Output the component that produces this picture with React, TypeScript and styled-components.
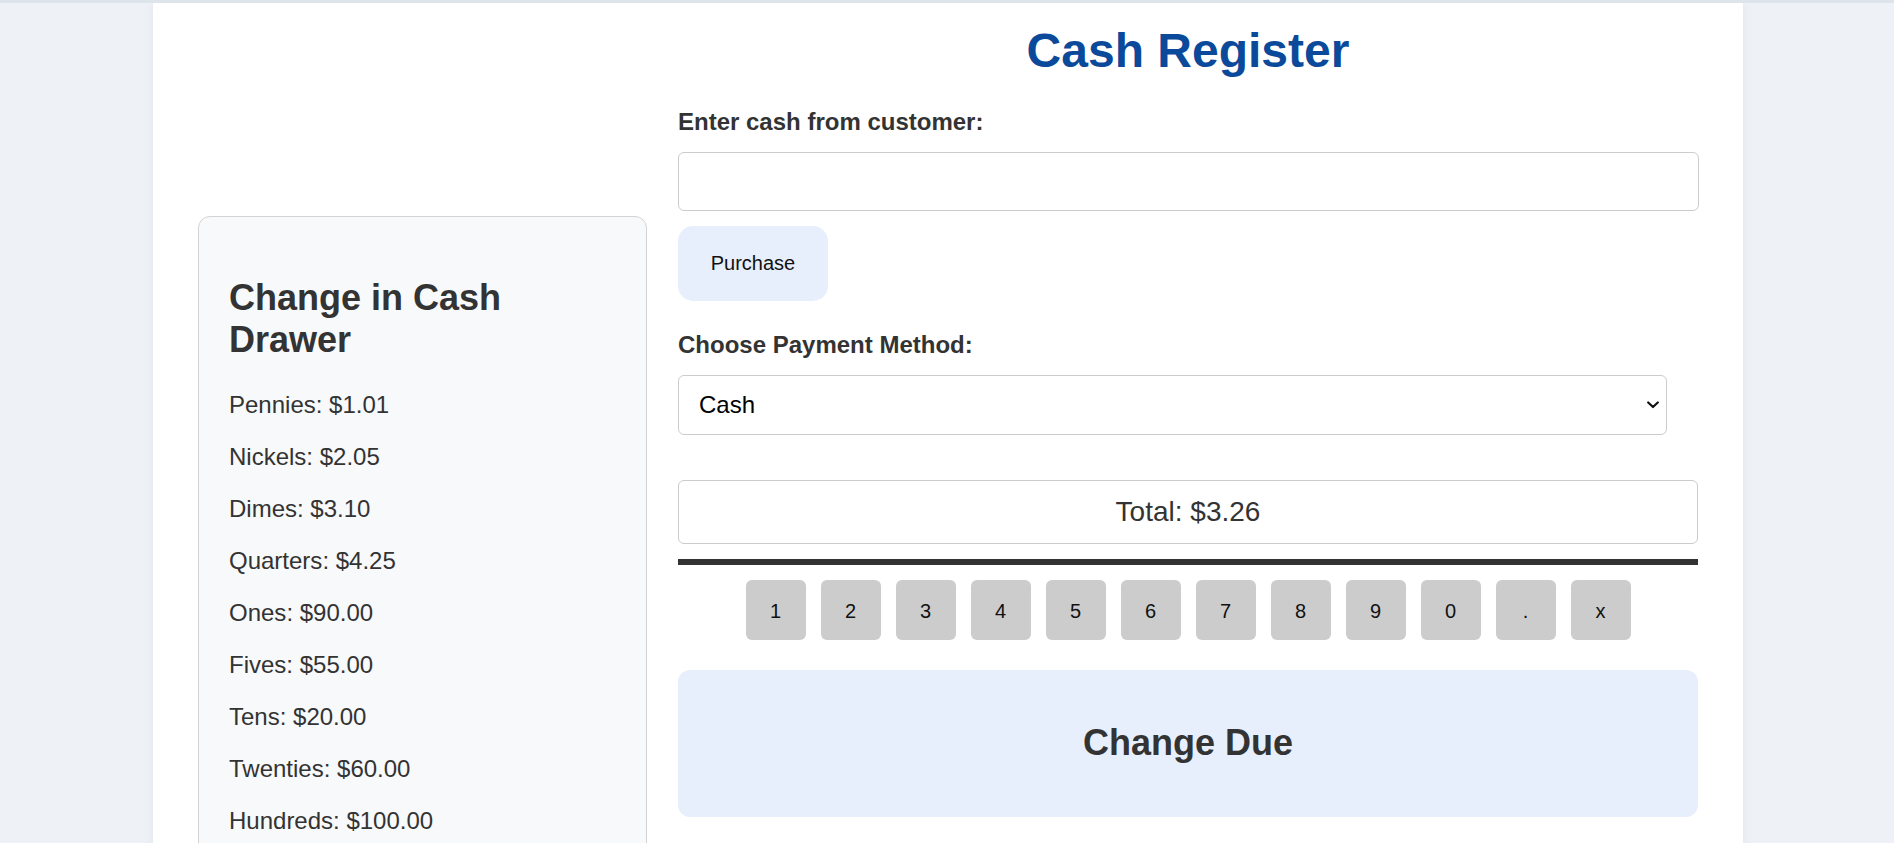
import React from "react";
import styled, { createGlobalStyle } from "styled-components";

const GlobalStyle = createGlobalStyle`
  html { scrollbar-width: none; }
  html::-webkit-scrollbar { display: none; }
  body {
    margin: 0;
    background: #eef2f7;
    border-top: 3px solid #dde4ea;
    font-family: "Liberation Sans", Arial, sans-serif;
    color: #333;
  }
  * { box-sizing: border-box; }
`;

const Page = styled.div`
  width: 1590px;
  margin: 0 0 0 calc(50% - 794px);
  background: #ffffff;
  box-shadow: 0 0 10px rgba(0, 0, 0, 0.06);
  padding: 19.5px 45px 45px;
  display: flex;
  align-items: flex-start;
  gap: 31px;
`;

const DrawerCard = styled.aside`
  flex: 0 0 449px;
  margin-top: 193.5px;
  background: #f8f9fa;
  border: 1px solid #d3d3d3;
  border-radius: 12px;
  padding: 30px;
`;

const DrawerTitle = styled.h2`
  margin: 30px 0;
  font-size: 36px;
  font-weight: 700;
  color: #333;
  line-height: normal;
`;

const DrawerItem = styled.p`
  margin: 24px 0;
  font-size: 24px;
  color: #333;
  line-height: normal;
`;

const Main = styled.main`
  flex: 1 1 auto;
  min-width: 0;
  display: flex;
  flex-direction: column;
  align-items: flex-start;
`;

const Title = styled.h1`
  align-self: stretch;
  margin: 0 0 30px;
  text-align: center;
  font-size: 48px;
  font-weight: 700;
  color: #0b4a9b;
  line-height: normal;
`;

const Label = styled.label`
  display: block;
  font-size: 24px;
  font-weight: 700;
  color: #333;
  margin-bottom: 16px;
  line-height: normal;
`;

const CashInput = styled.input`
  width: calc(100% + 1px);
  height: 59px;
  border: 1px solid #cccccc;
  border-radius: 6px;
  padding: 0 15px;
  font-size: 24px;
  font-family: inherit;
  margin: 0 0 15px;
  outline: none;
`;

const PurchaseButton = styled.button`
  width: 150px;
  height: 75px;
  border: none;
  border-radius: 15px;
  background: #e8effc;
  color: #111;
  font-family: "Liberation Sans", Arial, sans-serif;
  font-size: 20px;
  margin-bottom: 30px;
  cursor: pointer;
`;

const SelectWrap = styled.div`
  position: relative;
  width: 97%;
  margin-bottom: 45px;
`;

const MethodSelect = styled.select`
  appearance: none;
  -webkit-appearance: none;
  width: 100%;
  height: 60px;
  border: 1px solid #cccccc;
  border-radius: 6px;
  background: #fff;
  padding: 0 40px 0 20px;
  font-family: "Liberation Sans", Arial, sans-serif;
  font-size: 24px;
  color: #000;
  outline: none;
`;

const Chevron = styled.svg`
  position: absolute;
  right: 8px;
  top: 50%;
  width: 12px;
  height: 8px;
  transform: translateY(-50%);
  pointer-events: none;
`;

const TotalBox = styled.div`
  width: 100%;
  border: 1px solid #cccccc;
  border-radius: 6px;
  padding: 15px;
  text-align: center;
  font-size: 28px;
  line-height: normal;
  color: #333;
  margin-bottom: 15px;
`;

const Divider = styled.div`
  width: 100%;
  height: 6px;
  background: #333333;
  margin-bottom: 15px;
`;

const Keypad = styled.div`
  align-self: stretch;
  display: flex;
  justify-content: center;
  gap: 15px;
  margin-bottom: 30px;
`;

const Key = styled.button`
  width: 60px;
  height: 60px;
  border: none;
  border-radius: 6px;
  background: #cccccc;
  color: #111;
  font-family: "Liberation Sans", Arial, sans-serif;
  font-size: 20px;
  padding: 3px 0 0;
  cursor: pointer;
`;

const ChangeDue = styled.section`
  width: 100%;
  background: #e8effc;
  border-radius: 12px;
  padding: 22.5px;
  text-align: center;
`;

const ChangeTitle = styled.h2`
  margin: 30px 0;
  font-size: 36px;
  font-weight: 700;
  color: #333;
  line-height: normal;
`;

const drawer: [string, string][] = [
  ["Pennies", "$1.01"],
  ["Nickels", "$2.05"],
  ["Dimes", "$3.10"],
  ["Quarters", "$4.25"],
  ["Ones", "$90.00"],
  ["Fives", "$55.00"],
  ["Tens", "$20.00"],
  ["Twenties", "$60.00"],
  ["Hundreds", "$100.00"],
];

const keys = ["1", "2", "3", "4", "5", "6", "7", "8", "9", "0", ".", "x"];

export default function App() {
  return (
    <>
      <GlobalStyle />
      <Page>
        <DrawerCard>
          <DrawerTitle>Change in Cash Drawer</DrawerTitle>
          {drawer.map(([name, value]) => (
            <DrawerItem key={name}>
              {name}: {value}
            </DrawerItem>
          ))}
        </DrawerCard>
        <Main>
          <Title>Cash Register</Title>
          <Label htmlFor="cash">Enter cash from customer:</Label>
          <CashInput id="cash" type="text" />
          <PurchaseButton>Purchase</PurchaseButton>
          <Label htmlFor="method">Choose Payment Method:</Label>
          <SelectWrap>
            <MethodSelect id="method" defaultValue="cash">
              <option value="cash">Cash</option>
              <option value="card">Card</option>
            </MethodSelect>
            <Chevron viewBox="0 0 12 8" aria-hidden="true">
              <polyline
                points="1.2,1.5 6,6 10.8,1.5"
                fill="none"
                stroke="#111"
                strokeWidth="2.2"
                strokeLinecap="round"
                strokeLinejoin="round"
              />
            </Chevron>
          </SelectWrap>
          <TotalBox>Total: $3.26</TotalBox>
          <Divider />
          <Keypad>
            {keys.map((k) => (
              <Key key={k}>{k}</Key>
            ))}
          </Keypad>
          <ChangeDue>
            <ChangeTitle>Change Due</ChangeTitle>
          </ChangeDue>
        </Main>
      </Page>
    </>
  );
}
